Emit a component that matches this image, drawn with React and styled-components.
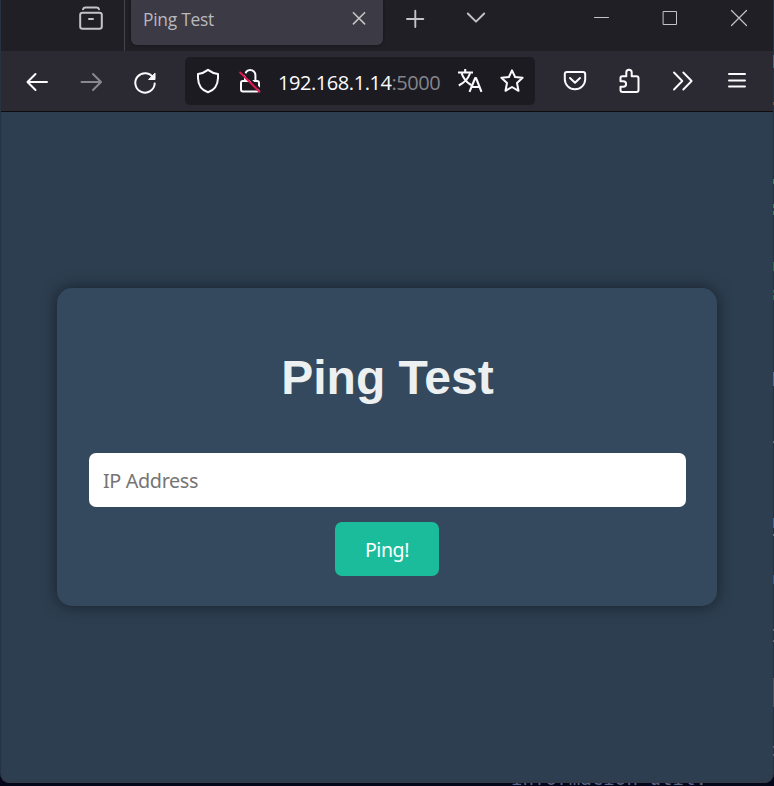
import React from "react";
import styled, { createGlobalStyle } from "styled-components";

const GlobalStyle = createGlobalStyle`
  *, *::before, *::after { box-sizing: border-box; }
  html, body { margin: 0; padding: 0; overflow: hidden; background: #030619; }
`;

const Desktop = styled.div`
  position: relative;
  width: 774px;
  height: 786px;
  padding: 0 1px 0 1px;
  background: #040719;
  overflow: hidden;
`;

const TerminalText = styled.div`
  position: absolute;
  left: 511px;
  top: 767px;
  font: 19px/22px "DejaVu Sans Mono", monospace;
  letter-spacing: 0.1px;
  color: #59648a;
  white-space: pre;
`;

const TerminalMark = styled.span`
  position: absolute;
  right: 0;
  top: ${(p) => p.$top}px;
  width: 1px;
  height: ${(p) => p.$h}px;
  background: ${(p) => p.$color};
`;

const BrowserWindow = styled.div`
  position: relative;
  display: flex;
  flex-direction: column;
  height: 783px;
  border-radius: 0 0 9px 9px;
  overflow: hidden;
  background: #2d3e50;
  box-shadow: inset 0 -2px 1px #343c48, 1px 0 0 #263343, -1px 0 0 #263343;
`;

const TabBar = styled.header`
  display: flex;
  align-items: flex-start;
  flex: 0 0 51px;
  padding-left: 78px;
  background: #201f26;
  color: #c4c4c8;
`;

const NavBar = styled.nav`
  display: flex;
  align-items: center;
  flex: 0 0 61px;
  padding: 0 0 1px 24px;
  gap: 30px;
  background: #2b2a33;
  border-bottom: 1px solid #0c0c0e;
  color: #fbfbfe;
`;

const Glyph = styled.svg`
  display: block;
  flex: none;
  width: 24px;
  height: 24px;
  overflow: visible;
  fill: none;
  stroke: currentColor;
  stroke-width: ${(p) => p.$w || 2};
  stroke-linecap: round;
  stroke-linejoin: round;
  opacity: ${(p) => (p.$dim ? 0.45 : 1)};
`;

const TabSlot = styled.span`
  margin: 6px 0 0 ${(p) => p.$gap || 0}px;
`;

const Divider = styled.span`
  width: 1px;
  height: 51px;
  margin: 0 6px 0 21px;
  background: #45444d;
`;

const Tab = styled.div`
  display: flex;
  align-items: center;
  justify-content: space-between;
  width: 252px;
  height: 45px;
  padding: 0 12px 8px;
  border-radius: 0 0 6px 6px;
  background: #3c3a44;
  box-shadow: 0 0 3px #141319;
`;

const TabTitle = styled.span`
  font: 17.4px/24px "Open Sans", sans-serif;
  letter-spacing: -0.25px;
  color: #b9b8bd;
  white-space: nowrap;
`;

const UrlBar = styled.div`
  display: flex;
  align-items: center;
  width: 350px;
  height: 48px;
  margin: 0 -2px;
  padding: 0 11px;
  border-radius: 5px;
  background: #1c1b22;
`;

const Url = styled.span`
  flex: 0 0 180px;
  margin-left: 16px;
  padding-top: 4px;
  font: 20px/26px "Open Sans", sans-serif;
  letter-spacing: -0.43px;
  color: #fbfbfe;
  white-space: nowrap;
`;

const Port = styled.span`
  color: #85848b;
`;

const IconGap = styled.span`
  width: 18px;
`;

const Page = styled.main`
  flex: 1;
  padding: 176px 56px 0;
`;

const Card = styled.section`
  display: flex;
  flex-direction: column;
  align-items: center;
  width: 660px;
  height: 318px;
  padding: 59px 31px 0 32px;
  border-radius: 15px;
  background: #34495e;
  box-shadow: 0 0 15px rgba(0, 0, 0, 0.5);
`;

const Title = styled.h1`
  margin: 0 0 44px;
  font: bold 48px/62px "Liberation Sans", Arial, sans-serif;
  color: #ecf0f1;
`;

const AddressInput = styled.input`
  width: 100%;
  height: 54px;
  padding: 0 14px;
  border: 0;
  border-radius: 7px;
  outline: 0;
  background: #fff;
  font: 19.8px "Noto Sans", sans-serif;
  letter-spacing: -0.36px;
  &::placeholder { color: #757575; opacity: 1; }
`;

const PingButton = styled.button`
  width: 104px;
  height: 54px;
  margin: 15px 1px 0 0;
  padding: 0;
  border: 0;
  border-radius: 7px;
  background: #1abc9c;
  color: #fff;
  font: 19.5px "Noto Sans", sans-serif;
  letter-spacing: -0.4px;
`;

const MARKS = [
  [55, 13, "#426579"], [102, 3, "#6b513e"], [179, 5, "#3e7563"], [204, 4, "#3e7563"],
  [211, 4, "#3e7563"], [262, 9, "#326452"], [290, 3, "#326452"], [295, 5, "#326452"],
  [372, 14, "#526b91"], [441, 2, "#66707d"], [518, 10, "#3d6890"], [534, 2, "#65717e"],
  [575, 9, "#355a85"], [629, 2, "#606a76"], [640, 2, "#606a76"], [678, 29, "#4b5260"],
  [746, 2, "#596078"], [754, 2, "#596078"],
];

function Icon({ d, w, dim, children }) {
  return (
    <Glyph viewBox="0 0 24 24" $w={w} $dim={dim} aria-hidden="true">
      {d && <path d={d} />}
      {children}
    </Glyph>
  );
}

export default function App() {
  return (
    <Desktop>
      <GlobalStyle />
      <TerminalText>información útil:</TerminalText>
      <BrowserWindow>
        <TabBar>
          <TabSlot>
            <Icon d="M4 3.2Q4.5 1.5 6.5 1.5H17.5Q19.5 1.5 20 3.2M3.5 6.7H20.5Q22.8 6.7 22.8 9V20.5Q22.8 22.8 20.5 22.8H3.5Q1.2 22.8 1.2 20.5V9Q1.2 6.7 3.5 6.7M10 13H14" />
          </TabSlot>
          <Divider />
          <Tab>
            <TabTitle>Ping Test</TabTitle>
            <Icon w={1.6} d="M6.4 5.7 17.6 16.9M17.6 5.7 6.4 16.9" />
          </Tab>
          <TabSlot $gap={20}><Icon w={1.9} d="M4 13H20.3M12.3 4.8V21" /></TabSlot>
          <TabSlot $gap={37}><Icon w={1.9} d="M3.8 7.5 12 15.7 20.2 7.5" /></TabSlot>
          <TabSlot $gap={101}><Icon w={1} d="M5.5 11.5H19.5" /></TabSlot>
          <TabSlot $gap={45}><Icon w={1}><rect x="5.5" y="5.5" width="13" height="13" /></Icon></TabSlot>
          <TabSlot $gap={45}><Icon w={1.2} d="M4.5 4.5 19.5 19.5M19.5 4.5 4.5 19.5" /></TabSlot>
        </TabBar>
        <NavBar>
          <Icon d="M22 13H2.8M10.5 5 2.5 13 10.5 21" />
          <Icon dim d="M2.5 13H21.7M14 5 22 13 14 21" />
          <Icon>
            <path d="M20.4 9A9.7 9.7 0 1 0 21.7 14.5" />
            <path d="M22 4.5V10.5H16Z" fill="currentColor" strokeWidth="1" />
          </Icon>
          <UrlBar>
            <Icon d="M12 .9C9 3.2 5.5 4.6 2 5V9C2.2 15.7 5.2 21 12 23.3 18.8 21 21.8 15.7 22 9V5C18.5 4.6 15 3.2 12 .9Z" />
            <IconGap />
            <Icon>
              <path d="M4.5 12H19Q21 12 21 14V20.5Q21 22.5 19 22.5H5Q3 22.5 3 20.5V14Q3 12 4.5 12M7 11V6.2A5.2 5.2 0 0 1 17.4 6.2V11.5" />
              <path d="M3.5 1.8 23.3 21.5" stroke="#1c1b22" strokeWidth="2" strokeLinecap="butt" />
              <path d="M2.2 3.5 21.5 22.7" stroke="#e3174f" strokeWidth="2" />
            </Icon>
            <Url>192.168.1.14<Port>:5000</Port></Url>
            <Icon w={2.1}>
              <path strokeLinecap="butt" d="M0 3.5H15M7.2 0V3.5M3.7 4.5C5.5 10 8.5 13.2 13 16M12 4.5C10 10 6.5 13.5.8 16.5M11.5 22.8 17.2 9H18L23.5 22.8M13.8 18H21.2" />
            </Icon>
            <IconGap />
            <Icon d="M12 1.3 15.1 8 22.6 8.8 17 14 18.5 21.8 12 18 5.5 21.8 7 14 1.4 8.8 8.9 8Z" />
          </UrlBar>
          <Icon d="M4 3H20Q22.2 3 22.2 5V10.3A10.2 10 0 0 1 1.8 10.3V5Q1.8 3 4 3M7 9 12 13.7 17 9" />
          <Icon d="M5.2 7.3H9.3V3.5A2.7 2.7 0 0 1 14.7 3.5V7.3H19.5Q21.5 7.3 21.5 9.3V21Q21.5 23 19.5 23H5.5Q3.5 23 3.5 21V17.8H6.3A2.8 2.8 0 0 0 6.3 12.2H3.5V9Q3.5 7.3 5.2 7.3Z" />
          <Icon w={1.9} d="M3 3.5 11.3 12 3 20.5M12.3 3.5 20.6 12 12.3 20.5" />
          <Icon d="M4 5H20M4 11.5H20M4 17.5H20" />
        </NavBar>
        <Page>
          <Card>
            <Title>Ping Test</Title>
            <AddressInput placeholder="IP Address" />
            <PingButton>Ping!</PingButton>
          </Card>
        </Page>
      </BrowserWindow>
      {MARKS.map(([top, h, color]) => (
        <TerminalMark key={top} $top={top} $h={h} $color={color} />
      ))}
    </Desktop>
  );
}
